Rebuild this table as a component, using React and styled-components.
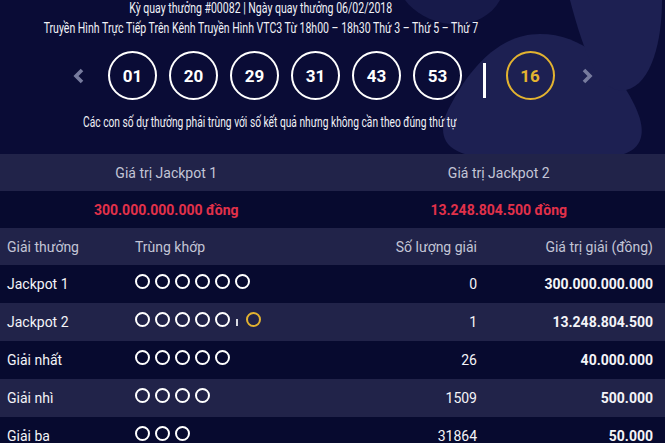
import React from "react";
import styled, { createGlobalStyle } from "styled-components";

const GlobalStyle = createGlobalStyle`
  html, body { margin: 0; padding: 0; background: #0a0c36; }
  body { font-family: Roboto, "Noto Sans", "Liberation Sans", sans-serif; color: #ffffff; }
  * { box-sizing: border-box; }
`;

const Page = styled.div`
  position: relative;
  width: 665px;
  height: 443px;
  overflow: hidden;
  background: #0a0c36;
`;

const Decor = styled.svg`
  position: absolute;
  left: 0;
  top: 0;
  width: 665px;
  height: 160px;
  z-index: 0;
`;

const Hero = styled.header`
  position: relative;
  z-index: 1;
  height: 154px;
  display: flex;
  flex-direction: column;
`;

const InfoLine = styled.div`
  display: flex;
  justify-content: center;
  width: ${(p) => 522 + (p.$shift || 0) * 2}px;
  height: 16px;
  line-height: 16px;
  margin-top: ${(p) => p.$mt || 0}px;
  font-size: 14px;
  color: #f1f2f7;
  white-space: nowrap;
`;

/* condensed rendering of the header copy (the reference uses a narrow face) */
const Narrow = styled.span`
  flex: none;
  display: inline-block;
  transform: scaleX(${(p) => p.$sx || 0.752});
  transform-origin: center;
`;

const BallsRow = styled.div`
  display: flex;
  align-items: center;
  height: 49px;
  margin-top: 15px;
  padding-left: 72px;
`;

const Chevron = styled.span`
  display: flex;
  width: 13px;
  margin-left: ${(p) => p.$ml || 0}px;
  color: #777b9e;
`;

const BallGroup = styled.div`
  display: flex;
  gap: 12px;
  margin-left: 23px;
`;

const Ball = styled.div`
  width: 49px;
  height: 49px;
  border-radius: 50%;
  border: 2.5px solid ${(p) => (p.$gold ? "#e3b330" : "#ffffff")};
  color: ${(p) => (p.$gold ? "#e3b330" : "#ffffff")};
  display: flex;
  align-items: center;
  justify-content: center;
  font-weight: 700;
  font-size: 17px;
`;

const Divider = styled.div`
  width: 2.5px;
  height: 35px;
  background: #ffffff;
  margin: 10px 20px 0 21px;
`;

const Band = styled.div`
  position: relative;
  z-index: 1;
  display: grid;
  grid-template-columns: 1fr 1fr;
  height: 37px;
  align-items: center;
  text-align: center;
  background: ${(p) => (p.$light ? "#212349" : "#070a2f")};
  font-size: 14px;
  color: ${(p) => (p.$red ? "#e2314a" : "#c3c5d6")};
  font-weight: ${(p) => (p.$red ? 700 : 400)};
`;

const Row = styled.div`
  display: grid;
  grid-template-columns: 128px 1fr 160px 176px;
  align-items: center;
  height: ${(p) => p.$h || 38}px;
  padding: 0 12px 0 7px;
  background: ${(p) => (p.$light ? "#212349" : "#070a2f")};
  font-size: 14px;
  color: ${(p) => (p.$head ? "#c3c5d6" : "#f4f4f8")};
`;

const Cell = styled.div`
  text-align: ${(p) => (p.$right ? "right" : "left")};
  font-weight: ${(p) => (p.$bold ? 700 : 400)};
  white-space: nowrap;
`;

const Rings = styled.div`
  display: flex;
  align-items: center;
  gap: 5px;
  padding-bottom: 5px;
`;

const Ring = styled.span`
  width: 15px;
  height: 15px;
  border-radius: 50%;
  border: 2.2px solid ${(p) => (p.$gold ? "#e3b330" : "#ffffff")};
`;

const Bar = styled.span`
  width: 2px;
  height: 7px;
  margin: 5px 3px 0 1px;
  background: #d9dae3;
`;

const ChevronIcon = ({ dir }) => (
  <svg width="13" height="16" viewBox="0 0 13 16">
    <path
      d={dir === "left" ? "M10 2 L4 8 L10 14" : "M3 2 L9 8 L3 14"}
      fill="none"
      stroke="currentColor"
      strokeWidth="3.6"
      strokeLinejoin="miter"
    />
  </svg>
);

const prizes = [
  { name: "Jackpot 1", rings: 6, extra: false, count: "0", value: "300.000.000.000" },
  { name: "Jackpot 2", rings: 5, extra: true, count: "1", value: "13.248.804.500" },
  { name: "Giải nhất", rings: 5, extra: false, count: "26", value: "40.000.000" },
  { name: "Giải nhì", rings: 4, extra: false, count: "1509", value: "500.000" },
  { name: "Giải ba", rings: 3, extra: false, count: "31864", value: "50.000" },
];

const numbers = ["01", "20", "29", "31", "43", "53"];

export default function App() {
  return (
    <Page>
      <GlobalStyle />
      <Decor viewBox="0 0 665 160" aria-hidden="true">
        <path
          d="M540 34 C498 34 468 70 448 110 C434 140 450 157 490 157 L602 157 C642 157 650 136 634 104 C614 64 582 34 540 34 Z"
          fill="#1d2052"
        />
        <path
          d="M570 0 L662 0 C662 40 652 84 626 90 C600 94 586 60 570 0 Z"
          fill="#1d2052"
        />
        <path d="M405 0 L500 0 C490 18 470 26 450 24 C430 22 414 12 405 0 Z" fill="#171a4a" />
      </Decor>
      <Hero>
        <InfoLine>
          <Narrow>Kỳ quay thưởng #00082 | Ngày quay thưởng 06/02/2018</Narrow>
        </InfoLine>
        <InfoLine $mt={4}>
          <Narrow>
            Truyền Hình Trực Tiếp Trên Kênh Truyền Hình VTC3 Từ 18h00 – 18h30 Thứ 3 – Thứ 5 – Thứ 7
          </Narrow>
        </InfoLine>
        <BallsRow>
          <Chevron>
            <ChevronIcon dir="left" />
          </Chevron>
          <BallGroup>
            {numbers.map((n) => (
              <Ball key={n}>{n}</Ball>
            ))}
          </BallGroup>
          <Divider />
          <Ball $gold>16</Ball>
          <Chevron $ml={26}>
            <ChevronIcon dir="right" />
          </Chevron>
        </BallsRow>
        <InfoLine $mt={14} $shift={9}>
          <Narrow $sx={0.73}>
            Các con số dự thưởng phải trùng với số kết quả nhưng không cần theo đúng thứ tự
          </Narrow>
        </InfoLine>
      </Hero>
      <Band $light>
        <div>Giá trị Jackpot 1</div>
        <div>Giá trị Jackpot 2</div>
      </Band>
      <Band $red>
        <div>300.000.000.000 đồng</div>
        <div>13.248.804.500 đồng</div>
      </Band>
      <Row $light $head $h={37}>
        <Cell>Giải thưởng</Cell>
        <Cell>Trùng khớp</Cell>
        <Cell $right>Số lượng giải</Cell>
        <Cell $right>Giá trị giải (đồng)</Cell>
      </Row>
      {prizes.map((p, i) => (
        <Row key={p.name} $light={i % 2 === 1}>
          <Cell>{p.name}</Cell>
          <Rings>
            {Array.from({ length: p.rings }).map((_, k) => (
              <Ring key={k} />
            ))}
            {p.extra && (
              <>
                <Bar />
                <Ring $gold />
              </>
            )}
          </Rings>
          <Cell $right>{p.count}</Cell>
          <Cell $right $bold>
            {p.value}
          </Cell>
        </Row>
      ))}
    </Page>
  );
}
